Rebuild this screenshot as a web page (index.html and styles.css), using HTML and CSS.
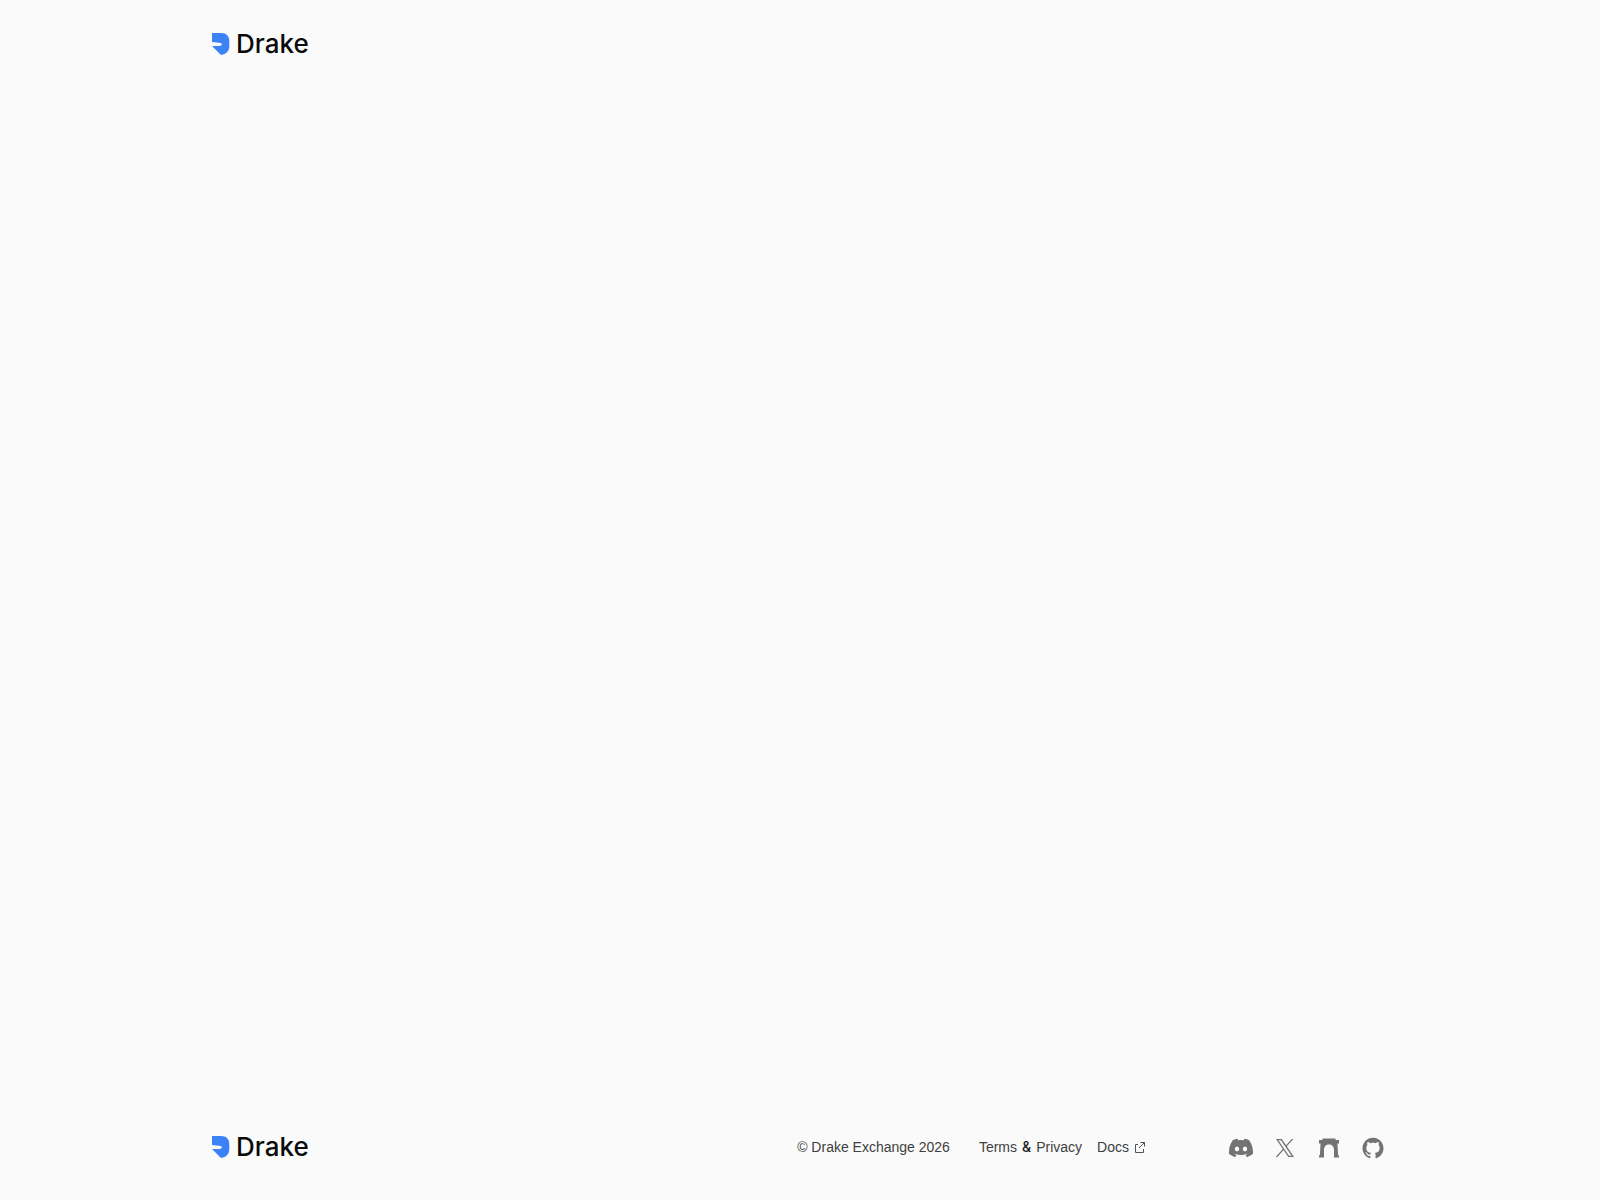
FILE: index.html
```html
<!DOCTYPE html>
<html lang="en">
<head>
    <meta charset="UTF-8">
    <meta name="viewport" content="width=device-width, initial-scale=1.0">
    <title>Drake Exchange</title>
    <link rel="stylesheet" href="styles.css">
</head>
<body>
    <header class="header container">
        <a class="logo" href="#">
            <svg class="logo-mark" viewBox="0 0 18 22" aria-hidden="true">
                <path d="M0 0H9C14.5 0 17.3 3.5 17.3 8V13C17.3 18 14.5 21 9 22L0 13H7C8.7 13 9.8 12.4 9.8 11.3C9.8 10.1 8.8 9.9 7 9.7L0 9Z"/>
            </svg>
            <span class="logo-text">Drake</span>
        </a>
    </header>

    <main class="content"></main>

    <footer class="footer container">
        <a class="logo" href="#">
            <svg class="logo-mark" viewBox="0 0 18 22" aria-hidden="true">
                <path d="M0 0H9C14.5 0 17.3 3.5 17.3 8V13C17.3 18 14.5 21 9 22L0 13H7C8.7 13 9.8 12.4 9.8 11.3C9.8 10.1 8.8 9.9 7 9.7L0 9Z"/>
            </svg>
            <span class="logo-text">Drake</span>
        </a>

        <div class="footer-right">
            <p class="copyright">© Drake Exchange 2026</p>
            <nav class="footer-links">
                <div class="legal">
                    <a href="#">Terms</a>
                    <span class="ampersand">&amp;</span>
                    <a href="#">Privacy</a>
                </div>
                <a class="docs" href="#">
                    Docs
                    <svg class="external-icon" viewBox="0 0 12 12" aria-hidden="true">
                        <path d="M4 3.5H1.5V11.5H9.5V8M6.5 1.5H10.5V5.5M10.5 1.5L5 7"/>
                    </svg>
                </a>
            </nav>
            <div class="social">
                <a href="#" aria-label="Discord">
                    <svg viewBox="0 0 24 24" aria-hidden="true">
                        <path d="M20.317 4.37a19.8 19.8 0 0 0-4.885-1.515.07.07 0 0 0-.079.037c-.21.375-.444.865-.608 1.25a18.3 18.3 0 0 0-5.487 0 12.6 12.6 0 0 0-.617-1.25.08.08 0 0 0-.079-.037A19.7 19.7 0 0 0 3.677 4.37C.533 9.046-.32 13.58.099 18.058a.08.08 0 0 0 .031.056 19.9 19.9 0 0 0 5.993 3.03.08.08 0 0 0 .084-.028c.462-.63.874-1.295 1.226-1.994a.08.08 0 0 0-.042-.106 13.1 13.1 0 0 1-1.872-.892.08.08 0 0 1-.008-.128l.372-.292a.07.07 0 0 1 .078-.01c3.928 1.793 8.18 1.793 12.061 0a.07.07 0 0 1 .079.01l.373.292a.08.08 0 0 1-.007.128 12.3 12.3 0 0 1-1.873.891.08.08 0 0 0-.041.107c.36.698.772 1.362 1.225 1.993a.08.08 0 0 0 .084.029 19.8 19.8 0 0 0 6.002-3.03.08.08 0 0 0 .032-.055c.5-5.177-.838-9.674-3.548-13.66zM8.02 15.33c-1.183 0-2.157-1.085-2.157-2.419s.955-2.419 2.157-2.419c1.21 0 2.176 1.095 2.157 2.419 0 1.334-.956 2.419-2.157 2.419zm7.975 0c-1.183 0-2.157-1.085-2.157-2.419s.955-2.419 2.157-2.419c1.21 0 2.176 1.095 2.157 2.419 0 1.334-.946 2.419-2.157 2.419z"/>
                    </svg>
                </a>
                <a href="#" aria-label="X">
                    <svg viewBox="0 0 24 24" aria-hidden="true">
                        <path fill-rule="evenodd" d="M3 3H8.7L13.1 9.2 18.7 3H20.4L13.8 10.3 21 21H15.3L10.6 14.1 4.4 21H2.7L9.8 13ZM5.3 4.3 16 19.7H18.6L7.9 4.3Z"/>
                    </svg>
                </a>
                <a href="#" aria-label="Mirror">
                    <svg viewBox="0 0 24 24" aria-hidden="true">
                        <path d="M5.5 2.5H18.5V4H22V7.5H20.5L21 18.5L22 20V21.5H17V14C17 10.5 15 8.5 12 8.5S7 10.5 7 14V21.5H2V20L3 18.5L3.5 7.5H2V4H5.5Z"/>
                    </svg>
                </a>
                <a href="#" aria-label="GitHub">
                    <svg viewBox="0 0 24 24" aria-hidden="true">
                        <path transform="translate(1.5 1.5) scale(.875)" d="M12 .297c-6.63 0-12 5.373-12 12 0 5.303 3.438 9.8 8.205 11.385.6.113.82-.258.82-.577 0-.285-.01-1.04-.015-2.04-3.338.724-4.042-1.61-4.042-1.61C4.422 18.07 3.633 17.7 3.633 17.7c-1.087-.744.084-.729.084-.729 1.205.084 1.838 1.236 1.838 1.236 1.07 1.835 2.809 1.305 3.495.998.108-.776.417-1.305.76-1.605-2.665-.3-5.466-1.332-5.466-5.93 0-1.31.465-2.38 1.235-3.22-.135-.303-.54-1.523.105-3.176 0 0 1.005-.322 3.3 1.23.96-.267 1.98-.399 3-.405 1.02.006 2.04.138 3 .405 2.28-1.552 3.285-1.23 3.285-1.23.645 1.653.24 2.873.12 3.176.765.84 1.23 1.91 1.23 3.22 0 4.61-2.805 5.625-5.475 5.92.42.36.81 1.096.81 2.22 0 1.606-.015 2.896-.015 3.286 0 .315.21.69.825.57C20.565 22.092 24 17.592 24 12.297c0-6.627-5.373-12-12-12"/>
                    </svg>
                </a>
            </div>
        </div>
    </footer>
</body>
</html>
```

FILE: styles.css
```css
* {
    margin: 0;
    padding: 0;
    box-sizing: border-box;
}

body {
    min-height: 100vh;
    display: flex;
    flex-direction: column;
    font-family: "Liberation Sans", Arial, sans-serif;
    font-size: 14px;
    line-height: 20px;
    color: #404040;
    background-color: #fafafa;
}

a {
    color: inherit;
    text-decoration: none;
}

.container {
    width: 100%;
    max-width: 1200px;
    margin: 0 auto;
    padding: 0 12px;
}

.content {
    flex: 1;
}

/* Header */
.header {
    padding-top: 28px;
}

.logo {
    display: inline-flex;
    align-items: center;
    gap: 6px;
}

.logo-mark {
    width: 18px;
    height: 22px;
    fill: #3b82f6;
}

.logo-text {
    font-family: Inter, sans-serif;
    font-size: 26px;
    font-weight: 500;
    line-height: 32px;
    color: #0a0a0a;
}

/* Footer */
.footer {
    display: flex;
    align-items: center;
    justify-content: space-between;
    padding-bottom: 37px;
}

.footer-right {
    display: flex;
    align-items: center;
}

.footer-links {
    display: flex;
    align-items: center;
    gap: 15px;
    margin-left: 29px;
    margin-right: 80px;
}

.legal {
    display: flex;
    gap: 5px;
}

.ampersand {
    font-family: Inter, sans-serif;
    font-weight: 500;
    color: #171717;
}

.docs {
    display: flex;
    align-items: center;
    gap: 5px;
}

.external-icon {
    width: 12px;
    height: 12px;
    fill: none;
    stroke: #525252;
    stroke-width: 1;
}

.social {
    display: flex;
    gap: 14px;
    padding-top: 2px;
}

.social a {
    width: 30px;
    height: 30px;
    display: flex;
    align-items: center;
    justify-content: center;
}

.social svg {
    width: 24px;
    height: 24px;
    fill: #737373;
}
```
